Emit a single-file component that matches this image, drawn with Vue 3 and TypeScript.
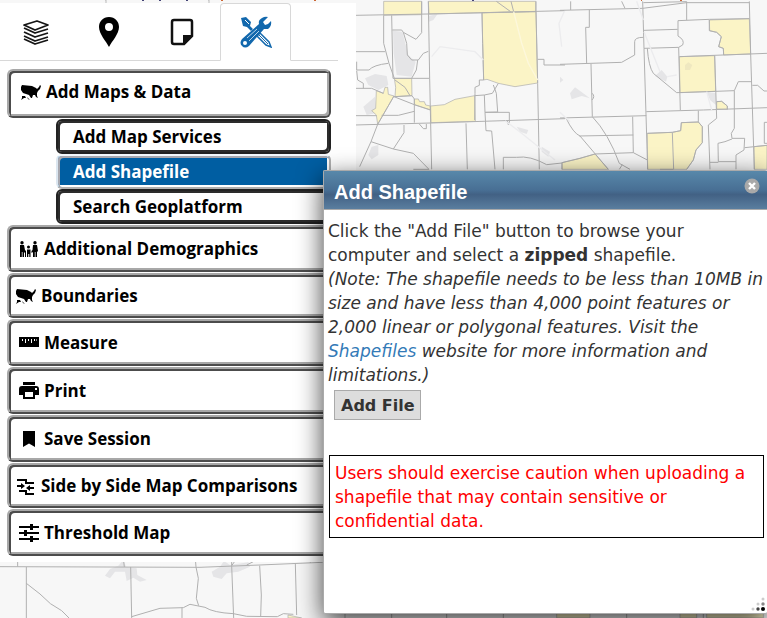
<script setup lang="ts">
import { ref } from 'vue'

type IconName = 'usa' | 'people' | 'ruler' | 'print' | 'bookmark' | 'compare' | 'sliders'

interface MenuEntry {
  label: string
  icon: IconName
  compact?: boolean
}

const services: string[] = ['Add Map Services', 'Add Shapefile', 'Search Geoplatform']
const activeService = ref('Add Shapefile')

const entries: MenuEntry[] = [
  { label: 'Additional Demographics', icon: 'people' },
  { label: 'Boundaries', icon: 'usa', compact: true },
  { label: 'Measure', icon: 'ruler' },
  { label: 'Print', icon: 'print' },
  { label: 'Save Session', icon: 'bookmark' },
  { label: 'Side by Side Map Comparisons', icon: 'compare', compact: true },
  { label: 'Threshold Map', icon: 'sliders' },
]

const glyphs: Record<IconName, string> = {
  usa: 'M1 3L11 4L13 5L15 6L16 7L18 5L19 3L20 4L19 7L17 9L16 11L16 14L17 16L15 15L14 13L12 13L11 16L10 16L8 13L5 12L2 11L0 8L0 5ZM1 14L4 14L5 16L3 16L0 18L1 16ZM6 15L9 18L7 17Z',
  people: 'M3 2a1.700 1.700 0 1 1 0 3.400a1.700 1.700 0 1 1 0-3.400M1 6H5L6 11L7 12V18H6V14L5 13V18H3.500V13H2.800V18H1ZM16 2a1.700 1.700 0 1 1 0 3.400a1.700 1.700 0 1 1 0-3.400M14 6H18L19 12L18 13V18H16.500V13H15.800V18H14V13L12.500 14V12L13.500 11ZM9.500 6.500a1.500 1.500 0 1 1 0 3a1.500 1.500 0 1 1 0-3M8 10.500H11.500V18H10.300V15H9.300V18H8Z',
  ruler: 'M0 4H20V14H0ZM3 6V8H4V6ZM6 6V10H7V6ZM9 6V8H10V6ZM12 6V10H13V6ZM15 6V8H16V6ZM17.500 6V8H18V6Z',
  print: 'M4 1H16V4H4ZM3 5H17Q20 5 20 8V14H16V18H4V14H0V8Q0 5 3 5ZM6 11V16H14V11ZM16 7V9H18V7Z',
  bookmark: 'M4 2H16V18L10 14.500L4 18Z',
  compare: 'M1 3H11V6H18V8H9V5H1ZM1 9H5V7L9 10L5 13V11H1ZM18 11V13H14V15L10 12L14 9V11ZM3 14H11V17H18V19H9V16H3Z',
  sliders: 'M0 3H11V1H14V3H20V5H14V7H11V5H0ZM0 9H5V7H8V9H20V11H8V13H5V11H0ZM0 15H11V13H14V15H20V17H14V19H11V17H0Z',
}
</script>

<template>
  <main class="page">
    <svg class="map" viewBox="0 0 767 618" preserveAspectRatio="xMidYMid slice" aria-hidden="true">
      <rect width="767" height="618" fill="#f7f7f7" />
      <g transform="scale(.33333)">
        <g transform="translate(1065 0)">
          <path class="water" d="M114 92L142 95L160 165L182 185L170 230L125 225L116 160ZM30 235L60 222L95 228L100 255L70 270L40 255ZM25 320L60 290L62 340L35 345ZM50 440L70 435L70 465L50 478L40 465ZM220 48L248 42L235 60L222 65ZM485 380L520 390L515 402L495 395ZM395 215L455 225L480 245L430 240ZM560 440L585 455L580 470L560 455Z" />
          <path class="zone" d="M86 4H200V44L86 46ZM220 4H542V35L222 42ZM381 38L543 35L548 249L480 260L430 250L396 238L386 240L383 130ZM118 235H170L171 287L120 290L122 262ZM64 272L85 280L90 262H98L100 283L117 288L68 373L64 345L50 332L62 325ZM178 297H190L194 305H208L212 315L226 318V330L178 314ZM227 318L268 314L300 298L359 287L361 364L228 368Z" />
          <path class="road" d="M0 46L220 42L630 32M220 4L224 235L230 508M86 46V130L102 190L118 235M200 4V98L183 118L145 97L140 90L112 90M110 46L114 235H224M145 97L155 130L157 165L170 180L190 180L205 160L220 154M188 180L184 210L170 235M0 155H90M5 185V210H42Q55 195 100 190M5 212L8 240L25 250V265M0 265H50L85 280M117 288L68 373L48 425L14 500M0 375L228 369L630 356M0 347H64M80 346H130L178 334M117 290L178 314L227 330M117 290L171 287M120 240L150 262L165 287M171 287L178 297V368M381 38L383 130L386 240L373 240V256L360 262V280L359 360M359 287L388 285L390 337L393 392L410 393L420 508M388 285L412 280L430 250M415 255L424 280L428 336L390 337H463V360M450 362H457L460 374L465 360M543 4V35L548 250L553 508M548 178H567V195H630M48 425L115 447L147 398V375M115 447L175 460L222 508M175 508H222M193 372L205 386H214V372M333 370L337 508M445 508V472H485Q525 466 575 494L630 488M424 4L467 35M468 4L476 35" />
          <path class="faint" d="M230 170L255 140L360 155L385 180M630 30L612 70L620 140M450 362L500 400L550 440L600 480" />
          <path d="M476 35L500 130L520 190L548 240" fill="none" stroke="#fdf8dc" stroke-width="4" />
        </g>
        <g transform="translate(1680 0)">
          <path class="water" d="M30 280L45 262L90 295L65 288L35 298ZM285 228L305 210L322 230L318 245ZM440 275L468 280L468 315L450 300ZM0 230L10 240L0 248Z" />
          <path class="zone" d="M448 60L568 56L572 162L491 165L490 145L476 140L484 110L470 97L449 92ZM358 170L464 167L467 274L360 278ZM470 305L485 304L502 318V328L470 327ZM262 400L337 397L362 392L364 368L415 366L427 380V428L408 450L400 480L380 508H263ZM6 508V488L60 475L105 462L145 508ZM582 440L621 436V508H583Z" />
          <path d="M375 195L385 187L397 195L390 210H375Z" fill="#efe8c0" />
          <path class="road" d="M0 31L248 25L380 8H568M32 4V30M185 4L195 25M88 30V82H77L80 190M0 193L185 187L224 165V125Q224 112 250 112M93 192L97 350M97 280Q106 290 96 300M248 4L252 145L263 508M250 8L380 5V60M252 91L353 88M252 145L356 142M354 62L448 58L568 56M354 62V108Q375 120 368 135L356 142L361 330M262 145Q266 200 280 220L350 278L467 274L523 272M358 170L621 160M448 60V92L470 97L484 110L476 140L490 145L491 165M464 167L470 355L445 375L450 508M568 4L572 162L583 508M523 272L535 245H573M523 272V385L514 400L516 415H554L552 450L528 465V508M516 417L495 425L474 430L475 485H528M450 487H475M577 256H593L612 273H621M0 354L259 347M259 335L430 330L621 323M415 332V366L427 380V428L408 450L400 480L380 508M262 400L337 397L362 392L364 368L415 366M337 397L341 508M97 350Q145 400 178 490L210 508M18 354Q40 400 60 408L145 508M58 408L220 405M105 462L220 458M218 350L220 458L262 480M6 508V488L60 475L105 462M178 508L187 494M470 305L485 304L502 318V328M554 443L621 436M621 367H613V430H621M300 508H340" />
          <path class="faint" d="M322 230L350 225M252 95L300 215M440 275L455 330M0 337L30 365M230 4L250 60" />
        </g>
        <g transform="translate(0 1635)">
          <path class="water" d="M315 92L330 72L355 62L370 45L378 65L410 70L412 90L440 105L420 110L400 98L380 108L375 80L345 80L330 100ZM635 80L660 65L672 48L690 60L745 52L750 65L715 80L680 85L665 102L640 95Z" />
          <path class="road" d="M0 65L600 67L780 60L968 52M53 40V65M79 66V219M79 115L120 147Q150 180 185 197L207 219M370 40L373 66M392 66L395 219M395 215L480 190L550 188L570 178L615 187Q640 203 700 206L740 214L832 215L850 206L880 208M546 188V219M586 40L588 66L595 100L589 160L596 182M695 40V62L701 219M695 62L705 48M740 60L760 50M779 62L784 150L782 215M886 56L890 210M931 45V54M1035 200V219M1175 200V219M1340 200V219M1510 200V219M1880 200V219M2110 200V219" />
          <path class="zone" d="M864 210L905 219H864ZM1670 200H1770V219H1670ZM2040 200H2090V219H2040ZM2120 200H2290V219H2120Z" />
        </g>
      </g>
      <path d="M105 0H106V3M208 0H209V3" stroke="#bbb" fill="none" />
      <path d="M142 0H144V1H142ZM159 0H161V1H159ZM186 0H188V1H186ZM472 0H474V1H472Z" fill="#447" />
      <path d="M221 0H223V1H221ZM314 0H316V1H314ZM641 0H642V1H641ZM680 0H682V1H680Z" fill="#c63" />
    </svg>

    <aside class="sidebar">
      <nav class="tabs" aria-label="Map panels">
        <button class="tab" type="button" aria-label="Layers">
          <svg width="28" height="28" viewBox="0 0 28 28" fill="none" stroke="#151515" stroke-width="1.800" stroke-linejoin="round">
            <path d="M2 7L15 3L26 7L13 12ZM2 10L13 15L26 11M2 14L13 19L26 15M2 18L13 23L26 19M2 21L13 26L26 22" />
          </svg>
        </button>
        <button class="tab" type="button" aria-label="Location">
          <svg width="22" height="32" viewBox="0 0 22 32">
            <path fill="#000" fill-rule="evenodd" d="M11 1C5 1 1 5.500 1 11C1 18 8 25 11 31C14 25 21 18 21 11C21 5.500 17 1 11 1ZM11 7A4 4 0 1 1 11 15A4 4 0 1 1 11 7Z" />
          </svg>
        </button>
        <button class="tab" type="button" aria-label="Basemap">
          <svg width="24" height="28" viewBox="0 0 24 28">
            <path d="M4 2H20Q22 2 22 4V18L14 26H4Q2 26 2 24V4Q2 2 4 2Z" fill="#fff" stroke="#111" stroke-width="2.500" />
            <path d="M13 26V17H22V19L15 26Z" fill="#111" />
          </svg>
        </button>
        <button class="tab tab-active" type="button" aria-label="Tools">
          <svg width="32" height="32" viewBox="0 0 32 32">
            <path d="M1 2L6 1L11 6L10 10L13 13L11 15L7 11L3 10Z" fill="#1268ad" />
            <path d="M5 4L9 8" stroke="#fff" />
            <path d="M17 20L20 17L29 26L31 31L26 29Z" fill="#fff" stroke="#1268ad" stroke-width="1.500" />
            <path d="M19 19L28 28" stroke="#1268ad" />
            <path d="M28 1L23 6L25 9L28 8L31 5Q32 10 28 13L24 13L9 30Q5 33 2 30Q-1 27 2 23L19 8Q18 4 22 2Q25 0 28 1Z" fill="#1268ad" />
            <path d="M7 22L17 13M9 25L19 15" stroke="#b9d5ea" />
            <circle cx="5" cy="27" r="2" fill="#fff" />
          </svg>
        </button>
      </nav>

      <div class="menu">
        <button class="item item-first" type="button">
          <svg class="icon" viewBox="0 0 20 20"><path :d="glyphs.usa" /></svg>
          <span>Add Maps &amp; Data</span>
        </button>
        <div class="submenu">
          <button
            v-for="name in services"
            :key="name"
            type="button"
            class="sub"
            :class="{ 'sub-active': name === activeService }"
            @click="activeService = name"
          >{{ name }}</button>
        </div>
        <div class="group">
          <button
            v-for="entry in entries"
            :key="entry.label"
            type="button"
            class="item"
            :class="{ 'item-compact': entry.compact }"
          >
            <svg class="icon" viewBox="0 0 20 20"><path fill-rule="evenodd" :d="glyphs[entry.icon]" /></svg>
            <span>{{ entry.label }}</span>
          </button>
        </div>
      </div>
    </aside>

    <section class="dialog" role="dialog" aria-labelledby="dialog-title">
      <header class="dialog-head">
        <h2 id="dialog-title">Add Shapefile</h2>
        <button class="close" type="button" aria-label="Close">
          <svg width="16" height="16" viewBox="0 0 16 16">
            <circle cx="8" cy="8" r="7.500" fill="#a9a9a9" />
            <path d="M5 5L11 11M11 5L5 11" stroke="#fff" stroke-width="2.400" />
          </svg>
        </button>
      </header>
      <div class="dialog-body">
        <p>Click the "Add File" button to browse your computer and select a <strong>zipped</strong> shapefile.</p>
        <p class="note">(Note: The shapefile needs to be less than 10MB in size and have less than 4,000 point features or 2,000 linear or polygonal features. Visit the <a href="#shapefiles">Shapefiles</a> website for more information and limitations.)</p>
        <button class="add-file" type="button">Add File</button>
        <p class="warning">Users should exercise caution when uploading a shapefile that may contain sensitive or confidential data.</p>
      </div>
      <svg class="grip" width="14" height="14" viewBox="0 0 14 14" aria-hidden="true">
        <g fill="#ccc"><circle cx="12" cy="2" r="1.500" /><circle cx="7" cy="7" r="1.500" /><circle cx="2" cy="12" r="1.500" /></g>
        <circle cx="12" cy="7" r="1.700" fill="#888" />
        <circle cx="7" cy="12" r="1.700" fill="#444" />
        <circle cx="12" cy="12" r="2" fill="#000" />
      </svg>
    </section>
  </main>
</template>

<style>
body {
  margin: 0;
}
</style>

<style scoped>
.page {
  position: relative;
  box-sizing: border-box;
  min-height: 100vh;
  padding-top: 3px;
  overflow: hidden;
  font-family: "Open Sans", "Noto Sans", sans-serif;
}
.map {
  position: absolute;
  inset: 0;
  width: 100%;
  height: 100%;
}
.zone {
  fill: #fbf4c6;
  stroke: #aaa;
  stroke-width: 2;
}
.road {
  fill: none;
  stroke: #b0b0b0;
  stroke-width: 3;
}
.water {
  fill: #e5e5e7;
}
.faint {
  fill: none;
  stroke: #ececee;
  stroke-width: 4;
}
.sidebar {
  position: relative;
  box-sizing: border-box;
  width: 356px;
  padding-bottom: 6px;
  background: #fff;
}
button {
  margin: 0;
  font-family: inherit;
  cursor: pointer;
}
.tabs {
  display: flex;
  gap: 3px;
  width: 337px;
  height: 57px;
  padding-left: 1px;
  border-bottom: 1px solid #d8d8d8;
}
.tab {
  box-sizing: border-box;
  display: flex;
  align-items: center;
  justify-content: center;
  width: 70px;
  height: 58px;
  padding: 0;
  border: 1px solid transparent;
  background: none;
}
.tab-active {
  width: 71px;
  border-color: #d8d8d8;
  border-bottom-color: #fff;
  border-radius: 4px 4px 0 0;
  background: #fff;
}
.menu {
  padding: 8px 25px 0 7px;
}
.item,
.sub {
  box-sizing: border-box;
  display: flex;
  align-items: center;
  width: 100%;
  color: #000;
  font-size: 17px;
  font-weight: 700;
  line-height: 24px;
  text-align: left;
  white-space: nowrap;
  border: 2px solid;
  border-radius: 6px;
}
.item {
  gap: 5px;
  height: 47px;
  padding: 0 10px;
  background: #fff;
  border-color: #a8a8a8 #4c4c4c #4c4c4c #a8a8a8;
  box-shadow: inset 2px 2px 0 #4c4c4c, inset -2px -2px 0 #a8a8a8;
}
.item-first {
  height: 49px;
  padding: 0 12px 4px;
}
.item-compact {
  height: 45px;
  padding-left: 7px;
}
.icon {
  flex: none;
  width: 20px;
  height: 20px;
}
.submenu {
  display: grid;
  padding: 1px 0 1px 49px;
}
.sub {
  height: 35px;
  padding: 0 15px;
  background: #fff;
  border-color: #222;
  box-shadow: inset 2px 2px 0 #2c2c2c, inset -2px -2px 0 #2c2c2c;
}
.sub-active {
  color: #fff;
  background: #005ea2;
  border-color: #f4f8fc #b0b0b0 #b0b0b0 #dbe6f0;
  box-shadow: inset 2px 2px 0 #a9a9b0, inset -2px -2px 0 #fff;
}
.group {
  display: grid;
  gap: 1px;
}
.dialog {
  position: absolute;
  top: 170px;
  right: 0;
  bottom: 4px;
  left: 323px;
  box-sizing: border-box;
  border: 1px solid #aaa;
  border-right: 0;
  border-radius: 2px;
  background: #fff;
  color: #333;
  font-family: "DejaVu Sans", sans-serif;
  font-size: 17px;
  line-height: 24px;
  box-shadow: 0 8px 26px rgba(0, 0, 0, 0.75);
}
.dialog-head {
  display: flex;
  justify-content: space-between;
  height: 38px;
  padding: 0 7px 0 10px;
  border-bottom: 1px solid #aaa;
  background: linear-gradient(#5888aa, #486f94 50%, #426184 62%, #5a7e9f);
}
.dialog-head h2 {
  margin: 0;
  color: #fff;
  font: bold 20px/43px "Liberation Sans", sans-serif;
}
.close {
  display: flex;
  align-items: center;
  height: 30px;
  padding: 0;
  border: 0;
  background: none;
}
.dialog-body {
  padding: 9px 3px 0 4px;
}
.dialog-body p {
  margin: 0;
}
.note {
  font-style: italic;
}
.note a {
  color: #337ab7;
  text-decoration: none;
}
.add-file {
  display: block;
  box-sizing: border-box;
  height: 30px;
  margin: 3px 6px 35px;
  padding: 2px 5px 0 6px;
  border: 1px solid #aaa;
  background: #ddd;
  color: #333;
  font-size: 16px;
  font-weight: 700;
  line-height: 24px;
}
.dialog-body .warning {
  margin-left: 1px;
  padding: 5px 5px 4px;
  border: 1px solid #000;
  color: #f00;
}
.grip {
  position: absolute;
  right: 2px;
  bottom: 2px;
}
</style>
